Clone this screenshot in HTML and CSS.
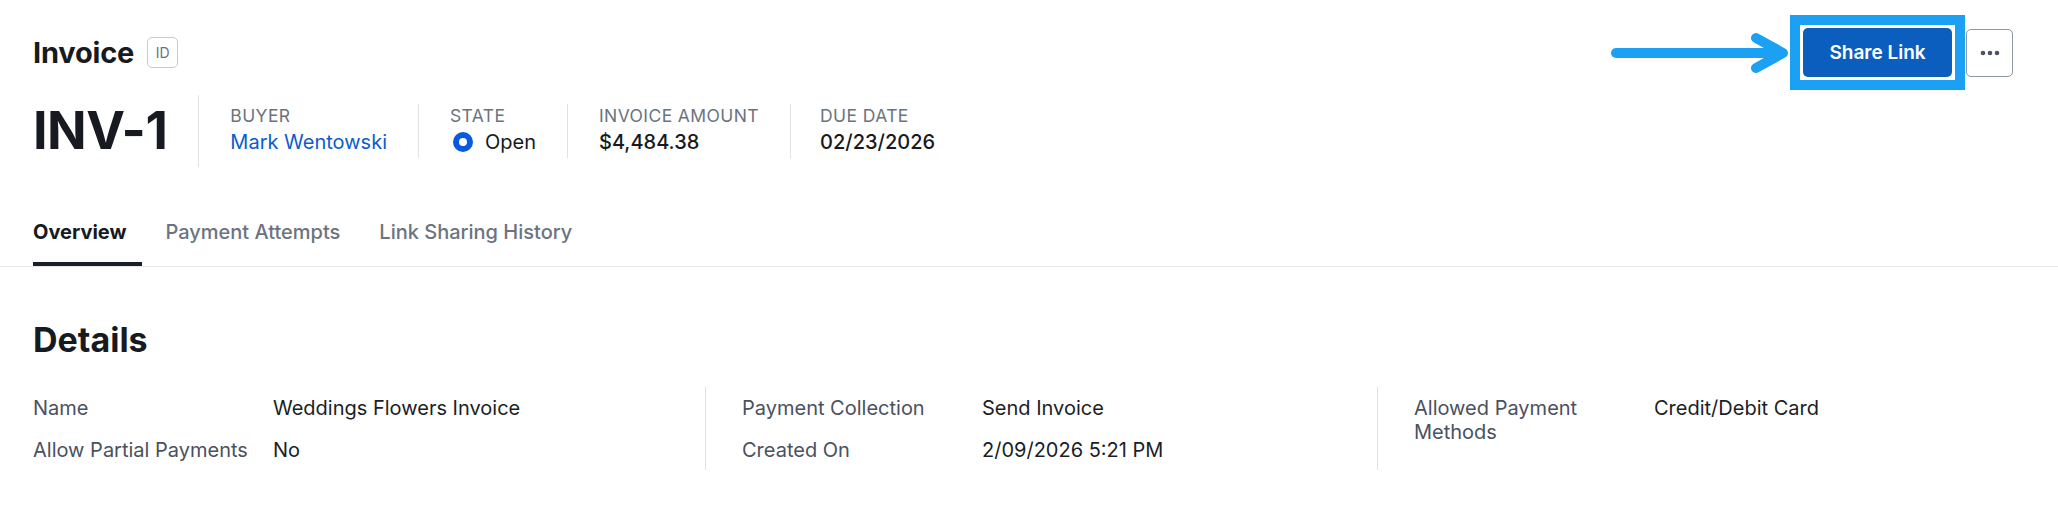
FILE: index.html
```html
<!DOCTYPE html>
<html lang="en">
<head>
<meta charset="utf-8">
<title>Invoice INV-1</title>
<link rel="stylesheet" href="styles.css">
</head>
<body>
<header class="page-head">
  <div class="title-row">
    <div class="title-left">
      <h1 class="title">Invoice</h1>
      <span class="id-badge">ID</span>
    </div>
    <div class="actions">
      <svg class="callout-arrow" width="186" height="44" viewBox="0 0 186 44" aria-hidden="true">
        <path d="M13 22 H176" fill="none" stroke="#1ba0f3" stroke-width="10" stroke-linecap="round"/>
        <path d="M153 7 L180 22 L153 37" fill="none" stroke="#1ba0f3" stroke-width="10" stroke-linecap="round" stroke-linejoin="round"/>
      </svg>
      <span class="callout-frame">
        <button class="btn-primary" type="button">Share Link</button>
      </span>
      <button class="btn-more" type="button" aria-label="More actions">
        <svg width="20" height="6" viewBox="0 0 20 6" aria-hidden="true">
          <circle cx="3" cy="3" r="2.3" fill="#4b5262"/>
          <circle cx="10" cy="3" r="2.3" fill="#4b5262"/>
          <circle cx="17" cy="3" r="2.3" fill="#4b5262"/>
        </svg>
      </button>
    </div>
  </div>
  <div class="meta-row">
    <div class="invoice-number">INV-1</div>
    <div class="meta-item">
      <div class="meta-label">BUYER</div>
      <div class="meta-value link">Mark Wentowski</div>
    </div>
    <div class="meta-item">
      <div class="meta-label">STATE</div>
      <div class="meta-value state">
        <span class="radio-dot"></span>
        <span>Open</span>
      </div>
    </div>
    <div class="meta-item">
      <div class="meta-label">INVOICE AMOUNT</div>
      <div class="meta-value strong">$4,484.38</div>
    </div>
    <div class="meta-item last">
      <div class="meta-label">DUE DATE</div>
      <div class="meta-value strong">02/23/2026</div>
    </div>
  </div>
</header>

<nav class="tabs">
  <a class="tab active">Overview</a>
  <a class="tab">Payment Attempts</a>
  <a class="tab">Link Sharing History</a>
</nav>

<section class="details">
  <h2 class="section-title">Details</h2>
  <div class="details-grid">
    <dl class="detail-col">
      <dt class="d-label">Name</dt>
      <dd class="d-value">Weddings Flowers Invoice</dd>
      <dt class="d-label">Allow Partial Payments</dt>
      <dd class="d-value">No</dd>
    </dl>
    <dl class="detail-col">
      <dt class="d-label">Payment Collection</dt>
      <dd class="d-value">Send Invoice</dd>
      <dt class="d-label">Created On</dt>
      <dd class="d-value">2/09/2026 5:21 PM</dd>
    </dl>
    <dl class="detail-col">
      <dt class="d-label wrap">Allowed Payment Methods</dt>
      <dd class="d-value">Credit/Debit Card</dd>
    </dl>
  </div>
</section>
</body>
</html>
```

FILE: styles.css
```css
* { box-sizing: border-box; }

html, body {
  margin: 0;
  padding: 0;
  background: #ffffff;
}

body {
  font-family: Inter, "Noto Sans", "Liberation Sans", sans-serif;
  color: #1b1e25;
}

/* ---------- header ---------- */
.page-head {
  padding: 28px 45px 0 33px;
}

.title-row {
  display: flex;
  align-items: center;
  justify-content: space-between;
  height: 49px;
}

.title-left {
  display: flex;
  align-items: center;
  gap: 13px;
}

.title {
  margin: 0;
  font-size: 29px;
  line-height: 36px;
  font-weight: 700;
  color: #171a21;
  letter-spacing: -0.2px;
}

.id-badge {
  display: inline-flex;
  align-items: center;
  justify-content: center;
  width: 31px;
  height: 31px;
  border: 1px solid #c5cad3;
  border-radius: 5px;
  font-size: 14px;
  color: #6b7380;
}

.actions {
  position: relative;
  display: flex;
  align-items: center;
  gap: 1px;
}

.callout-arrow {
  position: absolute;
  right: calc(100% + 1px);
  top: calc(50% - 22px);
}

.callout-frame {
  display: inline-flex;
  padding: 3px;
  border: 10px solid #1ba0f3;
  background: #ffffff;
}

.btn-primary {
  width: 149px;
  height: 49px;
  border: 0;
  border-radius: 5px;
  background: #0c5ebe;
  color: #ffffff;
  font-family: inherit;
  font-size: 19px;
  font-weight: 600;
}

.btn-more {
  display: flex;
  align-items: center;
  justify-content: center;
  width: 47px;
  height: 48px;
  padding: 0;
  border: 1.5px solid #8f98a8;
  border-radius: 5px;
  background: #ffffff;
}

.meta-row {
  display: flex;
  align-items: center;
  margin-top: 18px;
}

.invoice-number {
  font-size: 52px;
  line-height: 72px;
  font-weight: 700;
  color: #171a21;
  padding-right: 31px;
  border-right: 1px solid #dfe3e8;
  letter-spacing: -0.5px;
}

.meta-item {
  padding: 0 31px 2px 31px;
  border-right: 1px solid #dfe3e8;
}

.meta-item.last {
  border-right: 0;
  padding-left: 29px;
}

.meta-label {
  font-size: 17.5px;
  line-height: 24px;
  color: #6b7380;
  letter-spacing: 0.4px;
}

.meta-value {
  font-size: 20px;
  line-height: 28px;
  color: #171a21;
}

.meta-value.link { color: #0b5ccc; }
.meta-value.strong { font-weight: 500; }

.meta-value.state {
  display: flex;
  align-items: center;
  gap: 12px;
}

.radio-dot {
  width: 20px;
  height: 20px;
  border-radius: 50%;
  border: 6px solid #0a5ae0;
  background: #ffffff;
  margin-left: 3px;
}

/* ---------- tabs ---------- */
.tabs {
  display: flex;
  gap: 23px;
  margin-top: 52px;
  padding-left: 33px;
  border-bottom: 1px solid #e3e6eb;
}

.tab {
  font-size: 20px;
  line-height: 26px;
  font-weight: 500;
  color: #6b7380;
  padding: 0 16px 17px 0;
  border-bottom: 4px solid transparent;
}

.tab.active {
  color: #171a21;
  font-weight: 700;
  border-bottom-color: #1b1f28;
}

/* ---------- details ---------- */
.details {
  padding: 0 9px 0 33px;
}

.section-title {
  margin: 53px 0 0 0;
  font-size: 34px;
  line-height: 40px;
  font-weight: 700;
  color: #171a21;
}

.details-grid {
  display: grid;
  grid-template-columns: repeat(3, 1fr);
  margin-top: 27px;
}

.detail-col {
  display: grid;
  grid-template-columns: 216px 1fr;
  column-gap: 24px;
  row-gap: 18px;
  align-content: start;
  margin: 0;
  padding: 9px 24px 8px 36px;
  border-left: 1px solid #d9e1f0;
}

.detail-col:first-child {
  padding-left: 0;
  border-left: 0;
}

.d-label {
  font-size: 20px;
  line-height: 24px;
  color: #4a5160;
  white-space: nowrap;
}

.d-label.wrap { white-space: normal; }

.d-value {
  margin: 0;
  font-size: 20px;
  line-height: 24px;
  color: #1b1e25;
}
```
